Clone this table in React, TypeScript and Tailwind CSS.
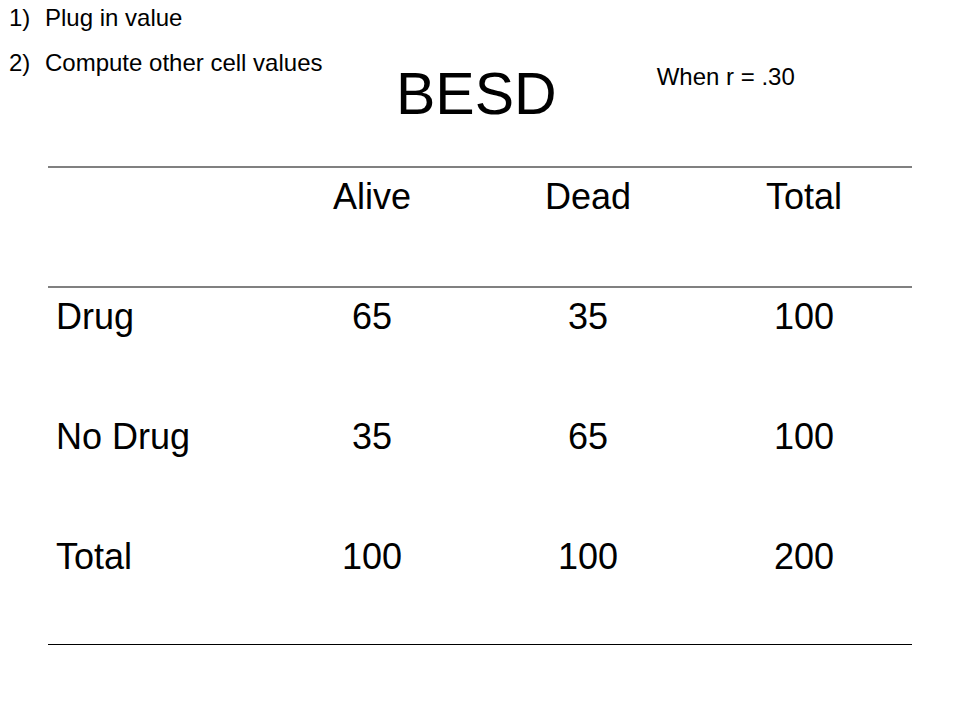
const rows = [
  { label: "Drug", alive: "65", dead: "35", total: "100" },
  { label: "No Drug", alive: "35", dead: "65", total: "100" },
  { label: "Total", alive: "100", dead: "100", total: "200" },
];

export default function App() {
  return (
    <div className="w-[960px] h-[720px] bg-white text-black font-['Liberation_Sans',Arial,sans-serif]">
      <div className="flex items-start h-[166px]">
        <ol className="w-[396px] pl-[9px] pt-[6px] text-[24px] leading-[24px] flex flex-col gap-[21px]">
          <li className="flex">
            <span className="w-[36px] shrink-0">1)</span>
            <span>Plug in value</span>
          </li>
          <li className="flex">
            <span className="w-[36px] shrink-0">2)</span>
            <span>Compute other cell values</span>
          </li>
        </ol>
        <h1 className="mt-[65px] text-[59px] leading-[59px]">BESD</h1>
        <p className="ml-[100px] mt-[65px] text-[24px] leading-[24px]">When r = .30</p>
      </div>

      <div className="ml-[48px] w-[864px] text-[36px] leading-[36px]">
        <div className="grid grid-cols-4 h-[122px] border-y-2 border-[#808080] pt-[11px]">
          <div />
          <div className="text-center">Alive</div>
          <div className="text-center">Dead</div>
          <div className="text-center">Total</div>
        </div>
        {rows.map((row, i) => (
          <div
            key={row.label}
            className={`grid grid-cols-4 pt-[11px] ${i === rows.length - 1 ? "h-[117px] border-b border-black" : "h-[120px]"}`}
          >
            <div className="pl-[8px]">{row.label}</div>
            <div className="text-center">{row.alive}</div>
            <div className="text-center">{row.dead}</div>
            <div className="text-center">{row.total}</div>
          </div>
        ))}
      </div>
    </div>
  );
}
